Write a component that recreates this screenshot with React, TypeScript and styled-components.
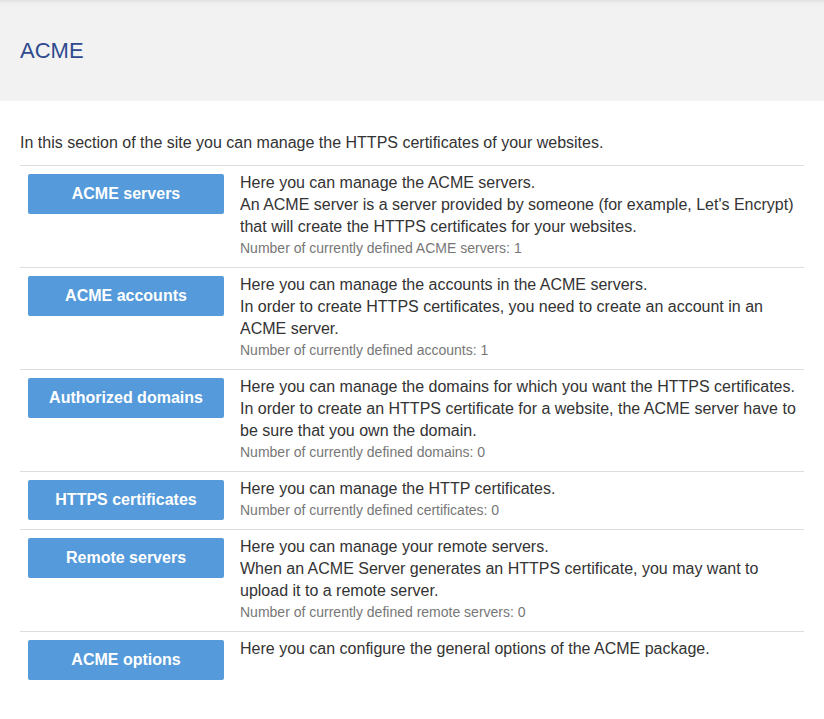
import React from "react";
import styled, { createGlobalStyle } from "styled-components";

const Global = createGlobalStyle`
  html, body { margin: 0; padding: 0; background: #fff; }
  body { font-family: "Liberation Sans", Arial, sans-serif; color: #333; }
`;

const Header = styled.header`
  height: 101px;
  box-sizing: border-box;
  padding: 39px 20px 0;
  background: linear-gradient(to bottom, #e2e2e2 0px, #efefef 4px, #f2f2f2 7px, #f2f2f2 100%);
`;

const Title = styled.h1`
  margin: 0;
  font-size: 22px;
  line-height: 24px;
  font-weight: normal;
  color: #2f4a8f;
`;

const Main = styled.main`
  padding: 31px 20px 0;
`;

const Intro = styled.p`
  margin: 0 0 11px;
  font-size: 16px;
  line-height: 22px;
`;

const Table = styled.div`
  display: flex;
  flex-direction: column;
`;

const Row = styled.div`
  display: grid;
  grid-template-columns: 212px 1fr;
  border-top: 1px solid #ddd;
`;

const ButtonCell = styled.div`
  padding: 8px;
`;

const ActionButton = styled.button`
  width: 196px;
  height: 40px;
  border: none;
  border-radius: 2px;
  background: #559ada;
  color: #fff;
  font-family: "Liberation Sans", Arial, sans-serif;
  font-weight: bold;
  font-size: 16px;
  cursor: pointer;
  padding: 0;
`;

const Desc = styled.div`
  padding: 6px 8px 9px 8px;
  font-size: 16px;
  line-height: 22px;
`;

const Count = styled.div`
  font-size: 14px;
  line-height: 20px;
  color: #777;
`;

type Item = { label: string; lines: string[]; count?: string };

const items: Item[] = [
  {
    label: "ACME servers",
    lines: [
      "Here you can manage the ACME servers.",
      "An ACME server is a server provided by someone (for example, Let's Encrypt) that will create the HTTPS certificates for your websites.",
    ],
    count: "Number of currently defined ACME servers: 1",
  },
  {
    label: "ACME accounts",
    lines: [
      "Here you can manage the accounts in the ACME servers.",
      "In order to create HTTPS certificates, you need to create an account in an ACME server.",
    ],
    count: "Number of currently defined accounts: 1",
  },
  {
    label: "Authorized domains",
    lines: [
      "Here you can manage the domains for which you want the HTTPS certificates.",
      "In order to create an HTTPS certificate for a website, the ACME server have to be sure that you own the domain.",
    ],
    count: "Number of currently defined domains: 0",
  },
  {
    label: "HTTPS certificates",
    lines: ["Here you can manage the HTTP certificates."],
    count: "Number of currently defined certificates: 0",
  },
  {
    label: "Remote servers",
    lines: [
      "Here you can manage your remote servers.",
      "When an ACME Server generates an HTTPS certificate, you may want to upload it to a remote server.",
    ],
    count: "Number of currently defined remote servers: 0",
  },
  {
    label: "ACME options",
    lines: ["Here you can configure the general options of the ACME package."],
  },
];

export default function App() {
  return (
    <>
      <Global />
      <Header>
        <Title>ACME</Title>
      </Header>
      <Main>
        <Intro>In this section of the site you can manage the HTTPS certificates of your websites.</Intro>
        <Table>
          {items.map((it) => (
            <Row key={it.label}>
              <ButtonCell>
                <ActionButton>{it.label}</ActionButton>
              </ButtonCell>
              <Desc>
                {it.lines.map((l, i) => (
                  <div key={i}>{l}</div>
                ))}
                {it.count && <Count>{it.count}</Count>}
              </Desc>
            </Row>
          ))}
        </Table>
      </Main>
    </>
  );
}
